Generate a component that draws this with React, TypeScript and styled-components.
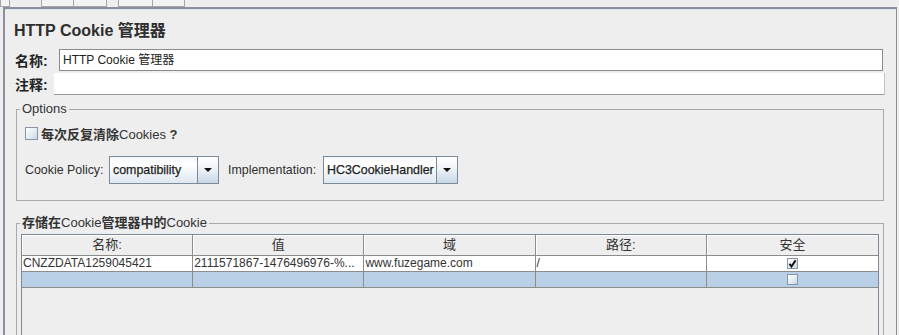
import React from 'react';
import styled, { createGlobalStyle } from 'styled-components';

const FONT = `"Liberation Sans", Arial, "Noto Sans CJK SC", sans-serif`;

const GlobalStyle = createGlobalStyle`
  html, body {
    margin: 0;
    padding: 0;
    background: #eeeeee;
  }
  body {
    font-family: ${FONT};
    color: #333333;
  }
`;

const Screen = styled.div`
  width: 899px;
  height: 335px;
  overflow: hidden;
  background: #eeeeee;
`;

const Toolbar = styled.div`
  display: flex;
  height: 7px;
`;

const ToolButton = styled.div<{ $w: number; $ml: number }>`
  width: ${p => p.$w}px;
  margin-left: ${p => p.$ml}px;
  height: 7px;
  box-sizing: border-box;
  border: 1px solid #a6a6a6;
  border-top: none;
  background: #f3f3f3;
`;

const Panel = styled.div`
  margin-left: 3px;
  width: 894px;
  height: 328px;
  box-sizing: border-box;
  border-left: 2px solid #8e909b;
  border-top: 2px solid #898ea0;
  border-right: 1px solid #8c8c8c;
  box-shadow: inset 0 1px 0 #dfe5f0;
  padding-left: 8px;
  display: flex;
  flex-direction: column;
`;

const Title = styled.div`
  margin-top: 12px;
  padding-left: 1px;
  height: 19px;
  line-height: 19px;
  font-size: 16px;
  font-weight: bold;
  color: #2e2e2e;
  white-space: nowrap;
`;

const FormRow = styled.div<{ $mt: number }>`
  display: flex;
  align-items: center;
  height: 22px;
  margin-top: ${p => p.$mt}px;
`;

const FieldLabel = styled.div<{ $w: number }>`
  width: ${p => p.$w}px;
  padding-left: 2px;
  box-sizing: border-box;
  font-size: 14px;
  font-weight: bold;
  color: #222222;
  white-space: nowrap;
`;

const TextInput = styled.div`
  width: 824px;
  height: 22px;
  box-sizing: border-box;
  border: 1px solid #8a8a8a;
  background: #ffffff;
  font-size: 12px;
  line-height: 20px;
  padding: 0 3px;
  color: #222222;
  white-space: nowrap;
`;

const CommentArea = styled.div`
  width: 831px;
  height: 22px;
  box-sizing: border-box;
  background: #ffffff;
  border-bottom: 1px solid #9a9a9a;
  border-right: 1px solid #c4c4c4;
`;

const Group = styled.fieldset<{ $mt: number }>`
  margin: ${p => p.$mt}px 0 0 3px;
  padding: 0;
  width: 868px;
  box-sizing: border-box;
  border: 1px solid #a9a9a9;
  min-inline-size: 0;
`;

const GroupTitle = styled.legend`
  margin-left: 3px;
  padding: 0 2px;
  font-size: 13px;
  line-height: 16px;
  color: #333333;
  white-space: nowrap;
`;

const OptionsBody = styled.div`
  padding: 9px 0 16px 8px;
  display: flex;
  flex-direction: column;
`;

const CheckRow = styled.div`
  display: flex;
  align-items: center;
  height: 14px;
`;

const Box = styled.div<{ $size: number }>`
  width: ${p => p.$size}px;
  height: ${p => p.$size}px;
  box-sizing: border-box;
  border: 1px solid #8796a8;
  background: linear-gradient(135deg, #ffffff 0%, #e4ebf3 55%, #c9d6e5 100%);
  display: flex;
  align-items: center;
  justify-content: center;
  flex-shrink: 0;
`;

const CheckLabel = styled.div`
  margin-left: 3px;
  font-size: 13px;
  white-space: nowrap;
  color: #333333;
`;

const Strong = styled.span`
  font-weight: bold;
`;

const PolicyRow = styled.div`
  display: flex;
  align-items: center;
  height: 28px;
  margin-top: 16px;
`;

const InlineLabel = styled.div<{ $w: number; $ml: number }>`
  width: ${p => p.$w}px;
  margin-left: ${p => p.$ml}px;
  font-size: 12.4px;
  color: #2f2f2f;
  white-space: nowrap;
`;

const Combo = styled.div<{ $w: number }>`
  width: ${p => p.$w}px;
  height: 28px;
  box-sizing: border-box;
  border: 1px solid #7a8a99;
  display: flex;
`;

const ComboValue = styled.div`
  flex: 1;
  padding-left: 3px;
  font-size: 12.4px;
  line-height: 26px;
  color: #1e1e1e;
  -webkit-text-stroke: 0.25px #1e1e1e;
  white-space: nowrap;
  overflow: hidden;
  background: linear-gradient(to bottom, #f4f7fb 0%, #ffffff 30%, #dfe7f0 100%);
`;

const ComboArrow = styled.div`
  width: 20px;
  border-left: 1px solid #7a8a99;
  display: flex;
  align-items: center;
  justify-content: center;
  background: linear-gradient(to bottom, #ffffff 0%, #eef3f8 45%, #c8d7e6 100%);
`;

const TableBody = styled.div`
  padding: 3px 4px 0 4px;
`;

const TableFrame = styled.div`
  width: 858px;
  height: 110px;
  box-sizing: border-box;
  border: 1px solid #7a8a99;
  background: #eeeeee;
`;

const Row = styled.div<{ $h: number; $bg: string }>`
  display: grid;
  grid-template-columns: repeat(5, 1fr);
  height: ${p => p.$h}px;
  background: ${p => p.$bg};
`;

const HeadCell = styled.div`
  box-sizing: border-box;
  border-right: 1px solid #8c8c8c;
  border-bottom: 1px solid #8c8c8c;
  box-shadow: inset 1px 1px 0 #ffffff;
  text-align: center;
  font-size: 13px;
  line-height: 20px;
  color: #333333;
  white-space: nowrap;
  &:last-child {
    border-right: none;
  }
`;

const Cell = styled.div<{ $center?: boolean }>`
  box-sizing: border-box;
  border-right: 1px solid #8c8c8c;
  border-bottom: 1px solid #8c8c8c;
  padding-left: 1px;
  font-size: 12px;
  line-height: 15px;
  color: #333333;
  white-space: nowrap;
  overflow: hidden;
  display: flex;
  align-items: center;
  justify-content: ${p => (p.$center ? 'center' : 'flex-start')};
  &:last-child {
    border-right: none;
  }
`;

const Arrow = () => (
  <svg width="8" height="4" viewBox="0 0 8 4">
    <polygon points="0,0 8,0 4,4" fill="#111111" />
  </svg>
);

const Tick = () => (
  <svg width="9" height="9" viewBox="0 0 9 9">
    <path d="M1.5 4.8 L3.4 7.6 L7.6 1.4" stroke="#111111" strokeWidth="1.9" fill="none" />
  </svg>
);

const headers = ['名称:', '值', '域', '路径:', '安全'];

const cookies = [
  {
    name: 'CNZZDATA1259045421',
    value: '2111571867-1476496976-%...',
    domain: 'www.fuzegame.com',
    path: '/',
    secure: true,
  },
];

export default function App() {
  return (
    <Screen>
      <GlobalStyle />
      <Toolbar>
        <ToolButton $w={10} $ml={0} />
        <ToolButton $w={33} $ml={31} />
        <ToolButton $w={34} $ml={-1} />
        <ToolButton $w={35} $ml={11} />
        <ToolButton $w={33} $ml={-1} />
      </Toolbar>
      <Panel>
        <Title>HTTP Cookie 管理器</Title>
        <FormRow $mt={9}>
          <FieldLabel $w={46}>名称:</FieldLabel>
          <TextInput>HTTP Cookie 管理器</TextInput>
        </FormRow>
        <FormRow $mt={2}>
          <FieldLabel $w={41}>注释:</FieldLabel>
          <CommentArea />
        </FormRow>

        <Group $mt={6}>
          <GroupTitle>Options</GroupTitle>
          <OptionsBody>
            <CheckRow>
              <Box $size={13} />
              <CheckLabel>
                <Strong>每次反复清除</Strong>Cookies <Strong>?</Strong>
              </CheckLabel>
            </CheckRow>
            <PolicyRow>
              <InlineLabel $w={84} $ml={0}>Cookie Policy:</InlineLabel>
              <Combo $w={110}>
                <ComboValue>compatibility</ComboValue>
                <ComboArrow>
                  <Arrow />
                </ComboArrow>
              </Combo>
              <InlineLabel $w={95} $ml={9}>Implementation:</InlineLabel>
              <Combo $w={135}>
                <ComboValue>HC3CookieHandler</ComboValue>
                <ComboArrow>
                  <Arrow />
                </ComboArrow>
              </Combo>
            </PolicyRow>
          </OptionsBody>
        </Group>

        <Group $mt={14}>
          <GroupTitle>
            <Strong>存储在</Strong>Cookie<Strong>管理器中的</Strong>Cookie
          </GroupTitle>
          <TableBody>
            <TableFrame>
              <Row $h={21} $bg="#eeeeee">
                {headers.map(h => (
                  <HeadCell key={h}>{h}</HeadCell>
                ))}
              </Row>
              {cookies.map(c => (
                <Row key={c.name} $h={16} $bg="#ffffff">
                  <Cell>{c.name}</Cell>
                  <Cell>{c.value}</Cell>
                  <Cell>{c.domain}</Cell>
                  <Cell>{c.path}</Cell>
                  <Cell $center>
                    <Box $size={11}>{c.secure && <Tick />}</Box>
                  </Cell>
                </Row>
              ))}
              <Row $h={16} $bg="#b8cfe5">
                <Cell />
                <Cell />
                <Cell />
                <Cell />
                <Cell $center>
                  <Box $size={11} />
                </Cell>
              </Row>
            </TableFrame>
          </TableBody>
        </Group>
      </Panel>
    </Screen>
  );
}
